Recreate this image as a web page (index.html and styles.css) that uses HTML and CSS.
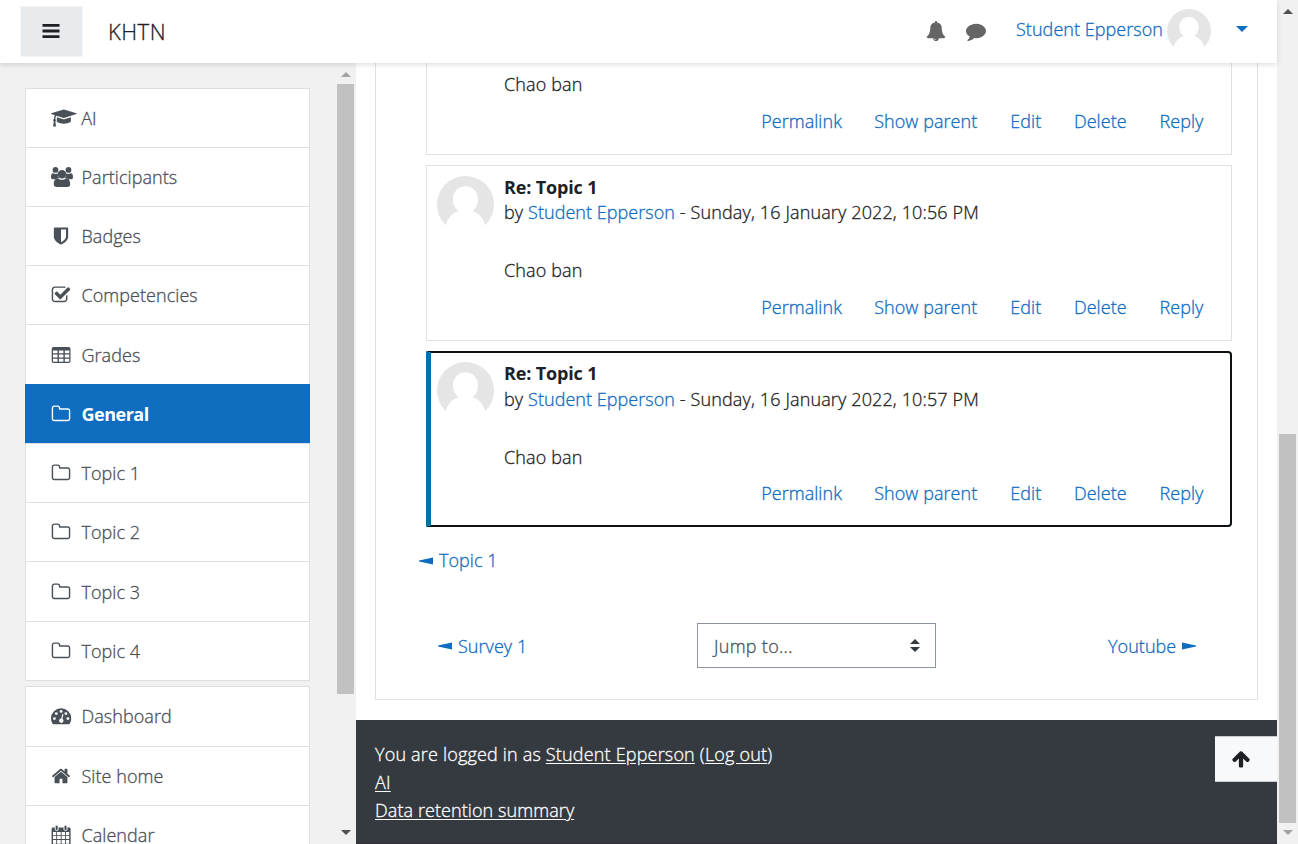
FILE: index.html
```
<!DOCTYPE html>
<html lang="en">
<head>
<meta charset="utf-8">
<title>KHTN</title>
<link rel="stylesheet" href="styles.css">
</head>
<body>
<svg class="defs" width="0" height="0">
  <symbol id="folder" viewBox="0 0 1792 1792"><path d="M1600 1312v-704q0-40-28-68t-68-28h-704q-40 0-68-28t-28-68v-64q0-40-28-68t-68-28h-320q-40 0-68 28t-28 68v960q0 40 28 68t68 28h1216q40 0 68-28t28-68zm128-704v704q0 92-66 158t-158 66h-1216q-92 0-158-66t-66-158v-960q0-92 66-158t158-66h320q92 0 158 66t66 158v32h672q92 0 158 66t66 158z"/></symbol>
  <symbol id="avatar" viewBox="0 0 100 100"><circle cx="50" cy="50" r="50" fill="#e5e5e5"/><path fill="#fff" d="M50 18c13 0 22 10 22 23 0 9-4 17-10 21 11 3 19 11 23 25v13H15V87c4-14 12-22 23-25-6-4-10-12-10-21 0-13 9-23 22-23z"/></symbol>
</svg>
<div class="app">
  <div class="page">
    <header class="navbar">
      <button class="menu-btn" aria-label="Side panel"><svg viewBox="0 0 20 20" class="icon"><path d="M1.500 3h17v2.800h-17zM1.500 8.600h17v2.800h-17zM1.500 14.200h17v2.800h-17z"/></svg></button>
      <span class="brand">KHTN</span>
      <div class="tools">
        <svg class="icon" viewBox="0 0 1792 1792"><path d="M912 1696q0-16-16-16-59 0-101.500-42.500t-42.500-101.500q0-16-16-16t-16 16q0 73 51.500 124.500t124.500 51.500q16 0 16-16zm816-288q0 52-38 90t-90 38h-448q0 106-75 181t-181 75-181-75-75-181h-448q-52 0-90-38t-38-90q50-42 91-88t85-119.500 74.500-158.500 50-206 19.500-260q0-152 117-282.500t307-158.500q-8-19-8-39 0-40 28-68t68-28 68 28 28 68q0 20-8 39 190 28 307 158.500t117 282.500q0 139 19.500 260t50 206 74.500 158.500 85 119.500 91 88z"/></svg>
        <svg class="icon" viewBox="0 0 1792 1792"><path d="M1792 896q0 174-120 321.500t-326 233-450 85.500q-70 0-145-8-198 175-460 242-49 14-114 22-17 2-30.500-9t-17.500-29v-1q-3-4-.5-12t2-10 4.500-9.500l6-9 7-8.500 8-9q7-8 31-34.500t34.500-38 31-39.500 32.500-51 27-59 26-76q-157-89-247.500-220t-90.500-281q0-130 71-248.500t191-204.500 286-136.500 348-50.500q244 0 450 85.500t326 233 120 321.500z"/></svg>
      </div>
      <a class="user">Student Epperson</a>
      <svg class="user-pic"><use href="#avatar"/></svg>
      <i class="caret"></i>
    </header>
    <div class="body">
      <aside class="drawer">
        <nav class="lists">
          <ul class="list">
            <li><svg class="icon wide" viewBox="0 0 2304 1792"><path d="M1774 836l18 316q4 69-82 128t-235 93.500-323 34.500-323-34.500-235-93.500-82-128l18-316 574 181q22 7 48 7t48-7zm530-324q0 23-22 31l-1120 352q-4 1-10 1t-10-1l-652-206q-43 34-71 111.500t-34 178.500q63 36 63 109 0 69-58 107l58 433q2 14-8 25-9 11-24 11h-192q-15 0-24-11-10-11-8-25l58-433q-58-38-58-107 0-73 65-111 11-207 98-330l-333-104q-22-8-22-31t22-31l1120-352q4-1 10-1t10 1l1120 352q22 8 22 31z"/></svg><span>AI</span></li>
            <li><svg class="icon people" viewBox="0 0 22 20"><circle cx="4.500" cy="2.900" r="2.900"/><circle cx="17.500" cy="2.900" r="2.900"/><path d="M2 6.200c2 1 3.500.9 4.900.3-.2 2 .3 3.400 1.300 4.400-1.600.1-2.900.5-3.800 1.400H2.300C.8 12.300 0 11.500 0 10.200 0 8.400.5 6.200 2 6.200zM20 6.200c-2 1-3.500.9-4.900.3.2 2-.3 3.400-1.300 4.400 1.600.1 2.900.5 3.800 1.400h2.100c1.500 0 2.300-.8 2.300-2.100 0-1.800-.5-4-2-4z"/><circle cx="11" cy="7.300" r="4.200"/><path d="M7 11.200c1.200 1 2.500 1.500 4 1.500s2.800-.5 4-1.500c3 0 4.200 2.800 4.200 6 0 1.800-1.100 2.800-2.900 2.800H5.700c-1.800 0-2.900-1-2.900-2.800 0-3.200 1.200-6 4.200-6z"/></svg><span>Participants</span></li>
            <li><svg class="icon" viewBox="0 0 1792 1792"><path d="M1344 960v-640h-448v1137q119-63 213-137 235-184 235-360zm192-768v768q0 86-33.500 170.500t-83 150-118 127.500-126.500 103-121 77.500-89.500 49.500-42.500 20q-12 6-26 6t-26-6q-16-7-42.500-20t-89.500-49.500-121-77.500-126.500-103-118-127.500-83-150-33.500-170.500v-768q0-26 19-45t45-19h1152q26 0 45 19t19 45z"/></svg><span>Badges</span></li>
            <li><svg class="icon" viewBox="0 0 1792 1792"><path d="M1472 930v318q0 119-84.500 203.500t-203.500 84.500h-832q-119 0-203.500-84.500t-84.500-203.500v-832q0-119 84.500-203.500t203.500-84.500h832q63 0 117 25 15 7 18 23 3 17-9 29l-49 49q-10 10-23 10-3 0-9-2-23-6-45-6h-832q-66 0-113 47t-47 113v832q0 66 47 113t113 47h832q66 0 113-47t47-113v-254q0-13 9-22l64-64q10-10 23-10 6 0 12 3 20 8 20 29zm231-489l-814 814q-24 24-57 24t-57-24l-430-430q-24-24-24-57t24-57l110-110q24-24 57-24t57 24l263 263 647-647q24-24 57-24t57 24l110 110q24 24 24 57t-24 57z"/></svg><span>Competencies</span></li>
            <li class="tall"><svg class="icon" viewBox="0 0 20 20"><path fill-rule="evenodd" d="M2.700 2h14.800c1.200 0 2 .8 2 2v12c0 1.200-.8 2-2 2H2.700c-1.200 0-2-.8-2-2V4c0-1.200.8-2 2-2zM2 5.500v2.700h4.500V5.500zm5.900 0v2.700h4.500V5.500zm5.900 0v2.700h4.500V5.500zM2 9.600v2.800h4.500V9.600zm5.900 0v2.800h4.500V9.600zm5.900 0v2.800h4.500V9.600zM2 13.800v2.200c0 .5.300.8.700.8h3.800v-3zm5.900 0v3h4.500v-3zm5.900 0v3h3.700c.5 0 .8-.3.800-.8v-2.200z"/></svg><span>Grades</span></li>
            <li class="active"><svg class="icon"><use href="#folder"/></svg><span>General</span></li>
            <li><svg class="icon"><use href="#folder"/></svg><span>Topic 1</span></li>
            <li><svg class="icon"><use href="#folder"/></svg><span>Topic 2</span></li>
            <li class="tall"><svg class="icon"><use href="#folder"/></svg><span>Topic 3</span></li>
            <li><svg class="icon"><use href="#folder"/></svg><span>Topic 4</span></li>
          </ul>
          <ul class="list site">
            <li><svg class="icon" viewBox="0 0 20 20"><path d="M0 12.300a10.100 10.100 0 0 1 20.200 0c0 2-.5 3.800-1.500 5.400-.2.300-.5.500-.9.500H2.400c-.4 0-.7-.2-.9-.5A10 10 0 0 1 0 12.300z"/><g fill="#fff"><circle cx="3.400" cy="12.600" r="1.400"/><circle cx="5.300" cy="7.600" r="1.400"/><circle cx="10.100" cy="5.400" r="1.400"/><circle cx="14.900" cy="7.600" r="1.400"/><circle cx="16.900" cy="12.600" r="1.400"/><path d="M11.400 8l1.100.3-1.100 4.500a2.200 2.200 0 1 1-1.200-.3z"/></g></svg><span>Dashboard</span></li>
            <li><svg class="icon" viewBox="0 0 1792 1792"><path d="M1472 992v480q0 26-19 45t-45 19h-384v-384h-256v384h-384q-26 0-45-19t-19-45v-480q0-1 .5-3t.5-3l575-474 575 474q1 2 1 6zm223-69l-62 74q-8 9-21 11h-3q-13 0-21-7l-692-577-692 577q-12 8-24 7-13-2-21-11l-62-74q-8-10-7-23.500t11-21.500l719-599q32-26 76-26t76 26l244 204v-195q0-14 9-23t23-9h192q14 0 23 9t9 23v408l219 182q10 8 11 21.500t-7 23.500z"/></svg><span>Site home</span></li>
            <li><svg class="icon" viewBox="0 0 20 20"><path fill-rule="evenodd" d="M2 2.500h16.200c.8 0 1.400.6 1.400 1.400v14.700c0 .8-.6 1.400-1.400 1.400H2c-.8 0-1.400-.6-1.400-1.400V3.900c0-.8.600-1.400 1.400-1.400zM2 7v2.900h3.200V7zm4.100 0v2.900h3.600V7zm4.500 0v2.900h3.500V7zM15 7v2.900h3.200V7zM2 10.800v3.300h3.200v-3.300zm4.100 0v3.300h3.600v-3.300zm4.500 0v3.300h3.500v-3.300zm4.400 0v3.300h3.200v-3.300zM2 15v3.700h3.200V15zm4.100 0v3.700h3.600V15zm4.500 0v3.700h3.500V15zM15 15v3.700h3.200V15z"/><rect x="4.200" y=".2" width="3" height="5.300" rx="1.300" stroke="#fff" stroke-width=".9"/><rect x="13" y=".2" width="3" height="5.300" rx="1.300" stroke="#fff" stroke-width=".9"/></svg><span>Calendar</span></li>
          </ul>
        </nav>
        <div class="scrollbar side"><i class="up"></i><b></b><i class="down"></i></div>
      </aside>
      <div class="content">
        <main class="card">
          <article class="post first">
            <p class="text">Chao ban</p>
            <div class="actions"><a class="a1">Permalink</a><a class="a2">Show parent</a><a class="a3">Edit</a><a class="a4">Delete</a><a class="a5">Reply</a></div>
          </article>
          <article class="post">
            <svg class="pic"><use href="#avatar"/></svg>
            <h3>Re: Topic 1</h3>
            <p class="by">by <a>Student Epperson</a> - Sunday, 16 January 2022, 10:56 PM</p>
            <p class="text">Chao ban</p>
            <div class="actions"><a class="a1">Permalink</a><a class="a2">Show parent</a><a class="a3">Edit</a><a class="a4">Delete</a><a class="a5">Reply</a></div>
          </article>
          <article class="post focused">
            <svg class="pic"><use href="#avatar"/></svg>
            <h3>Re: Topic 1</h3>
            <p class="by">by <a>Student Epperson</a> - Sunday, 16 January 2022, 10:57 PM</p>
            <p class="text">Chao ban</p>
            <div class="actions"><a class="a1">Permalink</a><a class="a2">Show parent</a><a class="a3">Edit</a><a class="a4">Delete</a><a class="a5">Reply</a></div>
          </article>
          <a class="back"><svg class="tri" viewBox="0 0 14 8"><path d="M0 3.500L14 .500v7L0 4.500z"/></svg><span>Topic 1</span></a>
          <div class="activity">
            <a class="prev"><svg class="tri" viewBox="0 0 14 8"><path d="M0 3.500L14 .500v7L0 4.500z"/></svg><span>Survey 1</span></a>
            <div class="select"><span>Jump to...</span><svg width="10" height="13" viewBox="0 0 10 13" fill="#343a40"><path d="M0 5L5 0l5 5zM0 8h10l-5 5z"/></svg></div>
            <a class="next"><span>Youtube</span><svg class="tri" viewBox="0 0 14 8"><path d="M14 3.500L0 .500v7l14-3z"/></svg></a>
          </div>
        </main>
        <footer class="footer">
          <p class="login">You are logged in as <a>Student Epperson</a> (<a>Log out</a>)</p>
          <p><a>AI</a></p>
          <p class="summary"><a>Data retention summary</a></p>
          <button class="top-btn" aria-label="Top"><svg class="icon" viewBox="0 0 1792 1792"><path d="M1675 971q0 51-37 90l-75 75q-38 38-91 38-54 0-90-38l-294-293v704q0 52-37.500 84.500t-90.500 32.500h-128q-53 0-90.500-32.500t-37.500-84.500v-704l-294 293q-36 38-90 38t-90-38l-75-75q-38-38-38-90 0-53 38-91l651-651q35-37 90-37 54 0 91 37l651 651q37 39 37 91z"/></svg></button>
        </footer>
      </div>
    </div>
  </div>
  <div class="scrollbar main"><i class="up"></i><b></b><i class="down"></i></div>
</div>
</body>
</html>
```
FILE: styles.css
```
* { box-sizing: border-box; }
body { margin: 0; overflow: hidden; font: 300 18px/25.5px "Open Sans", "Noto Sans", sans-serif; letter-spacing: .05px; -webkit-text-stroke: .3px; color: #1d2125; }
p, h3, ul { margin: 0; padding: 0; }
a { color: #0f6cbf; }
button { border: 0; padding: 0; }
.defs { position: absolute; }
.icon { width: 20px; height: 20px; fill: currentColor; flex: none; display: block; overflow: visible; }
.app { display: flex; width: 1298px; height: 844px; }
.page { width: 1277px; display: flex; flex-direction: column; }

.navbar { height: 63px; flex: none; display: flex; align-items: flex-start; background: #fff; box-shadow: 0 2px 5px rgba(0,0,0,.12); z-index: 2; padding-left: 20px; }
.menu-btn { width: 63px; height: 51px; margin-top: 6px; background: #e7ebee; border: 1px solid #f4f6f8; display: flex; align-items: center; justify-content: center; color: #1d2125; }
.menu-btn .icon { margin: -1px 1px 0 0; }
.brand { margin: 17px 0 0 25px; width: 700px; font-size: 22px; line-height: 28px; letter-spacing: .5px; }
.tools { display: flex; gap: 20px; margin: 21px 0 0 118px; color: #656565; }
.user { margin: 17px 0 0 30px; width: 146px; white-space: nowrap; }
.user-pic { width: 44px; height: 44px; margin: 9px 0 0 5px; }
.caret { margin: 26px 0 0 25px; border: 6px solid transparent; border-top-color: #0f6cbf; border-bottom: 0; }

.body { display: flex; height: 781px; }
.drawer { width: 356px; display: flex; justify-content: space-between; background: #f1f1f1; overflow: hidden; }
.lists { padding: 25px 0 0 25px; }
.list { width: 285px; list-style: none; border: 1px solid #dedede; border-top: 0; margin-bottom: 5px; background: #fff; }
.list li { height: 59.100px; border-top: 1px solid #dedede; display: flex; align-items: center; padding-left: 25px; gap: 10.500px; color: #495057; }
.list li span { padding-top: 1px; }
.list .tall { height: 59.600px; }
.list .tall span { padding-top: 2px; }
.list .tall + li:last-child { height: 59.300px; }
.list .tall + li:last-child span { padding-top: 2px; }
.site li { height: 59.400px; }
.site li:nth-child(2) span { padding-top: 2px; }
.list .wide { width: 25.700px; margin-right: -6px; }
.list .people { width: 22px; margin-right: -2px; }
.list .active { background: #0f6cbf; color: #fff; font-weight: 700; margin: 0 -1px; padding-left: 26px; border-color: #0f6cbf; letter-spacing: -.5px; -webkit-text-stroke: 0; }

.scrollbar { background: #f1f1f1; display: flex; flex-direction: column; align-items: center; }
.scrollbar b { width: 17px; background: #c1c1c1; }
.scrollbar i { border: 5px solid transparent; }
.scrollbar .up { border-top: 0; border-bottom-color: #505050; }
.scrollbar .down { border-bottom: 0; border-top-color: #505050; }
.main { width: 21px; }
.main .up { margin-top: 9px; }
.main b { margin-top: 420px; height: 389px; }
.main .down { margin-top: 7px; border-top-color: #a3a3a3; }
.side { width: 21px; }
.side .up { margin-top: 9px; border-bottom-color: #a3a3a3; }
.side b { margin-top: 7px; height: 610px; }
.side .down { margin-top: 136px; }

.content { width: 921px; background: #fff; }
.card { width: 883px; height: 637px; margin-left: 19px; border: 1px solid #dee2e6; border-top: 0; padding-left: 50px; }
.post { position: relative; width: 806px; height: 176px; margin-bottom: 10px; border: 1px solid #dee2e6; padding: 9px 0 0 77px; }
.post.first { height: 92px; border-top: 0; padding-top: 9px; }
.post h3 { font-size: 18px; font-weight: 700; line-height: 25px; letter-spacing: -.15px; -webkit-text-stroke: 0; }
.post .by { white-space: nowrap; letter-spacing: .14px; }
.by a { letter-spacing: .04px; }
.post h3 + .by + .text { margin-top: 32.500px; }
.text { letter-spacing: .12px; }
.pic { position: absolute; left: 10px; top: 10px; width: 57px; height: 57px; }
.actions { display: flex; justify-content: flex-end; gap: 32.600px; padding-right: 26.500px; margin-top: 11.500px; }
.actions a { white-space: nowrap; }
.a1 { width: 80.500px; } .a2 { width: 103.500px; } .a3 { width: 31px; } .a4 { width: 53px; } .a5 { width: 45px; }
.post.focused { border: 2px solid #0e1114; border-left: 5px solid #0070a8; border-radius: 0 4px 4px 0; padding: 8px 0 0 73px; }
.focused .pic { left: 6px; top: 9px; }
.focused .by { padding-top: 1px; }
.focused .actions { padding-right: 25.500px; margin-top: 10.500px; }
.tri { width: 14px; height: 8px; fill: #0f6cbf; }
.back { display: flex; width: 80px; align-items: center; gap: 6px; margin: 21px 0 0 -7px; white-space: nowrap; }
.activity { display: flex; align-items: center; margin: 49px 0 0 12px; }
.activity span { padding-top: 3px; }
.activity .tri { margin-top: 2px; }
.prev, .next { display: flex; align-items: center; gap: 6px; white-space: nowrap; }
.prev { width: 259px; }
.next { margin-left: 172px; }
.select { width: 239px; height: 45px; border: 1px solid #8f959e; display: flex; align-items: center; justify-content: space-between; padding: 0 15px 0 16px; color: #495057; letter-spacing: .3px; }
.footer { position: relative; height: 124px; margin-top: 20px; padding: 20px 19px 0; background: #353940; border-bottom: 1px solid #33303a; color: #fff; line-height: 28px; letter-spacing: .18px; }
.footer a { color: #fff; text-decoration: underline; text-underline-offset: 2px; }
.summary { letter-spacing: .08px; }
.top-btn { position: absolute; right: 0; top: 16px; width: 62px; height: 46px; padding-left: 16px; background: #f8f9fa; border: solid #c8cbd0; border-width: 1px 0; color: #1d2125; }
```
